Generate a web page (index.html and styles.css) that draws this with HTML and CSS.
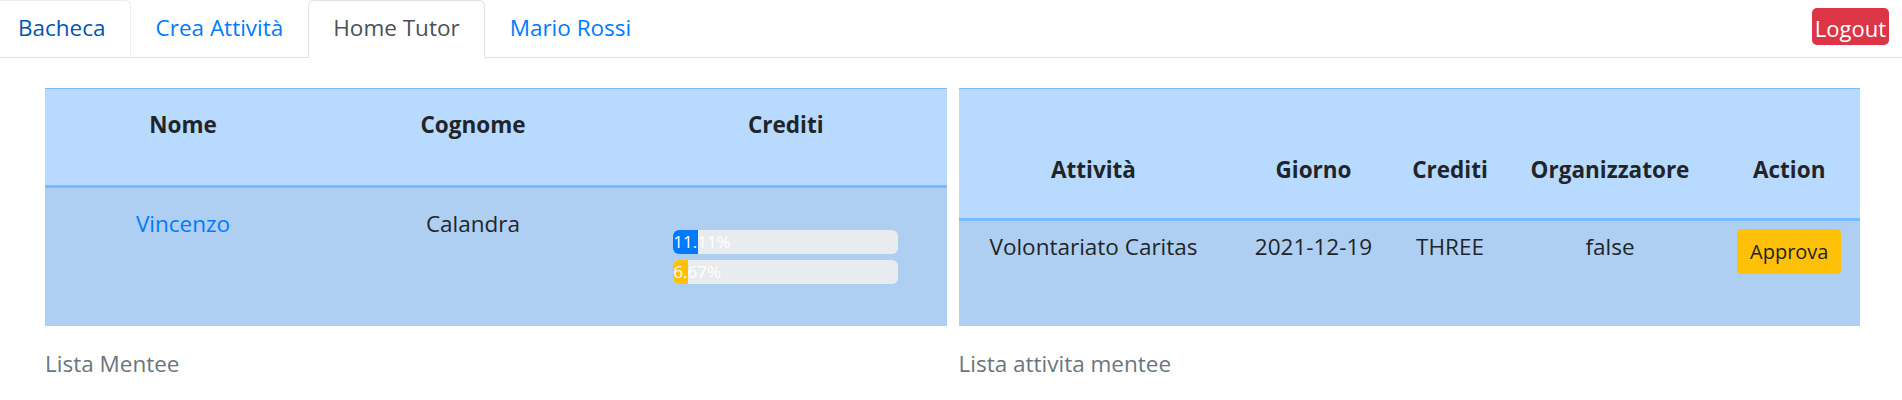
FILE: index.html
```html
<!DOCTYPE html>
<html lang="it">
<head>
<meta charset="utf-8">
<title>Home Tutor</title>
<link rel="stylesheet" href="styles.css">
</head>
<body>
<nav class="topbar">
  <ul class="tabs">
    <li class="tab tab-hover"><a href="#">Bacheca</a></li>
    <li class="tab"><a href="#">Crea Attività</a></li>
    <li class="tab tab-active"><a href="#">Home Tutor</a></li>
    <li class="tab"><a href="#">Mario Rossi</a></li>
  </ul>
  <button class="logout" type="button">Logout</button>
</nav>

<main class="content">
  <table class="grid grid-mentee">
    <caption>Lista Mentee</caption>
    <colgroup>
      <col class="c-nome"><col class="c-cognome"><col class="c-crediti">
    </colgroup>
    <thead>
      <tr><th>Nome</th><th>Cognome</th><th>Crediti</th></tr>
    </thead>
    <tbody>
      <tr>
        <td><a class="name-link" href="#">Vincenzo</a></td>
        <td>Calandra</td>
        <td>
          <div class="credits">
            <div class="progress"><div class="bar bar-blue" style="width:11.11%">11.11%</div></div>
            <div class="progress"><div class="bar bar-yellow" style="width:6.67%">6.67%</div></div>
          </div>
        </td>
      </tr>
    </tbody>
  </table>

  <table class="grid grid-activity">
    <caption>Lista attivita mentee</caption>
    <colgroup>
      <col class="c-att"><col class="c-giorno"><col class="c-cred"><col class="c-org"><col class="c-act">
    </colgroup>
    <thead>
      <tr><th>Attività</th><th>Giorno</th><th>Crediti</th><th>Organizzatore</th><th>Action</th></tr>
    </thead>
    <tbody>
      <tr>
        <td>Volontariato Caritas</td>
        <td>2021-12-19</td>
        <td>THREE</td>
        <td>false</td>
        <td><button class="approve" type="button">Approva</button></td>
      </tr>
    </tbody>
  </table>
</main>
</body>
</html>
```

FILE: styles.css
```css
* { box-sizing: border-box; }

html, body {
  margin: 0;
  padding: 0;
  background: #fff;
}

body {
  font-family: "Open Sans", "Noto Sans", sans-serif;
  font-size: 22.5px;
  line-height: 36px;
  color: #212529;
}

/* ---------- top navigation ---------- */
.topbar {
  display: flex;
  align-items: flex-start;
  height: 58px;
  border-bottom: 1px solid #dee2e6;
}

.tabs {
  display: flex;
  list-style: none;
  margin: 0 0 0 -7px;
  padding: 0;
}

.tab {
  margin-bottom: -1px;
  border: 1px solid transparent;
  border-top-left-radius: 6px;
  border-top-right-radius: 6px;
}

.tab a {
  display: block;
  padding: 9px 24px 11px;
  color: #007bff;
  text-decoration: none;
}

.tab-hover {
  border-color: #e9ecef #e9ecef #dee2e6;
}
.tab-hover a { color: #0056b3; }

.tab-active {
  background: #fff;
  border-color: #dee2e6 #dee2e6 #fff;
}
.tab-active a { color: #495057; }

.logout {
  margin: 8px 13px 0 auto;
  padding: 3px 3px 0;
  height: 37px;
  border: none;
  border-radius: 5px;
  background: #dc3545;
  color: #fff;
  font-family: inherit;
  font-size: 22px;
  line-height: 34px;
}

/* ---------- content ---------- */
.content {
  display: grid;
  grid-template-columns: 1fr 1fr;
  column-gap: 12px;
  padding: 30px 42px 0 45px;
}

.grid {
  width: 100%;
  table-layout: fixed;
  border-collapse: separate;
  border-spacing: 0;
  caption-side: bottom;
}

.grid caption {
  text-align: left;
  color: #6c757d;
  padding: 20px 0 0;
}

.grid th {
  background: #b8daff;
  border-top: 1px solid #7abaff;
  border-bottom: 3px solid #7abaff;
  font-weight: 700;
  text-align: center;
  vertical-align: top;
  padding: 0;
}

.grid td {
  background: #afcff2;
  text-align: center;
  vertical-align: top;
  padding: 0;
}

/* mentee table */
.grid-mentee th { padding-top: 18px; padding-bottom: 42px; }
.grid-mentee td { padding-top: 18px; height: 138px; }

.c-nome { width: 276px; }
.c-cognome { width: 304px; }

.name-link {
  color: #007bff;
  text-decoration: none;
}

.credits {
  width: 225px;
  margin: 24px auto 0;
  display: flex;
  flex-direction: column;
  gap: 6px;
}

.progress {
  display: flex;
  height: 24px;
  background: #e9ecef;
  border-radius: 6px;
  overflow: hidden;
}

.bar {
  display: flex;
  flex-direction: column;
  justify-content: center;
  white-space: nowrap;
  color: #fff;
  font-size: 17px;
  line-height: 24px;
  text-align: center;
}

.bar-blue { background: #007bff; }
.bar-yellow { background: #ffc107; }

/* activity table */
.grid-activity th { padding-top: 63px; padding-bottom: 30px; }
.grid-activity td { padding-top: 8px; height: 105px; }

.c-att { width: 270px; }
.c-giorno { width: 170px; }
.c-cred { width: 103px; }
.c-org { width: 217px; }

.approve {
  display: inline-block;
  vertical-align: top;
  padding: 6px 12px;
  border: 1px solid #ffc107;
  border-radius: 4px;
  background: #ffc107;
  color: #212529;
  font-family: inherit;
  font-size: 20px;
  line-height: 31px;
}
```
